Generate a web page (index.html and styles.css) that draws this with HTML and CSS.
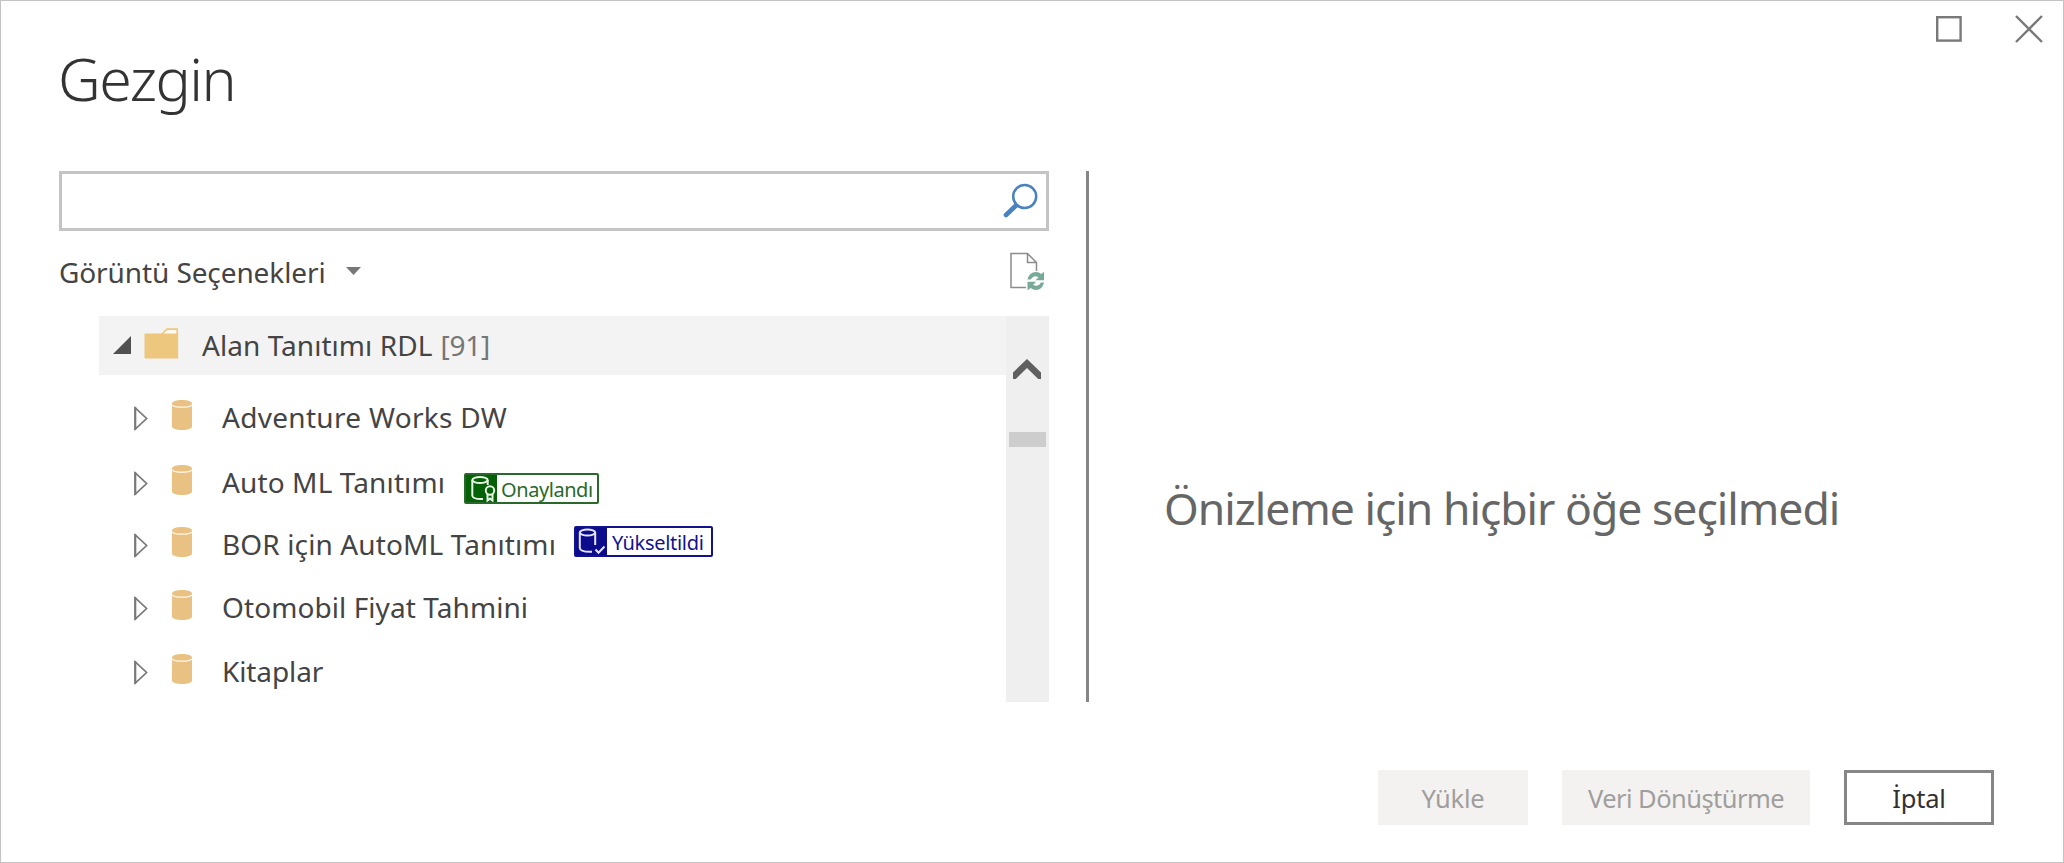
FILE: index.html
```html
<!DOCTYPE html>
<html lang="tr">
<head>
<meta charset="utf-8">
<title>Gezgin</title>
<link rel="stylesheet" href="styles.css">
</head>
<body>
<svg width="0" height="0" class="defs">
  <symbol id="tri" viewBox="0 0 14 25"><path d="M1.3 2v21L12.6 12.5Z" fill="#fff" stroke="#797979" stroke-width="1.7"/><path d="M1.2 1v23" stroke="#797979" stroke-width="2"/></symbol>
  <symbol id="cyl" viewBox="0 0 20 30"><path d="M0 3.5C0 1.4 4.5 0 10 0s10 1.400 10 3.500V26.500C20 28.600 15.500 30 10 30S0 28.600 0 26.500Z" fill="#e9c182"/><path d="M0 4.800C2 8 18 8 20 4.800" fill="none" stroke="#fff8ea" stroke-width="1.300"/></symbol>
</svg>
<main class="dialog">
  <div class="window-controls">
    <svg class="maximize" width="26" height="26" viewBox="0 0 26 26"><rect x="1.200" y="1.200" width="23.400" height="23.400" fill="none" stroke="#797979" stroke-width="2.400"/></svg>
    <svg width="28" height="28" viewBox="0 0 28 28"><path d="M1 1l26 26M27 1L1 27" stroke="#797979" stroke-width="2.400"/></svg>
  </div>
  <h1 class="title">Gezgin</h1>
  <div class="content">
    <section class="navigator">
      <div class="search">
        <svg width="35" height="36" viewBox="0 0 35 36"><circle cx="21.700" cy="13.600" r="11.500" fill="none" stroke="#4a82bf" stroke-width="2.500"/><path d="M13 22.500L3 32" stroke="#4a82bf" stroke-width="4.600" stroke-linecap="round"/></svg>
      </div>
      <div class="options">
        <span class="options-label">Görüntü Seçenekleri</span>
        <svg class="caret" width="15" height="8" viewBox="0 0 15 8"><path d="M0 0h15L7.500 8Z" fill="#777"/></svg>
        <svg class="refresh" width="35" height="39" viewBox="0 0 35 39">
          <path d="M16 35.600H1V1.500H17.500L26.500 10.500V19M17.500 1.500V10.500H26.500" fill="none" stroke="#8c8c8c" stroke-width="1.500"/>
          <path d="M17.500 27.500C18.300 23 21.800 20 26 20c2 0 3.800.7 5.200 2L34 19.800v8.400h-8.400l2.900-3A5 5 0 0 0 20.800 27.500Z" fill="#78aa98"/>
          <path d="M34 30.500C33.200 35 30 38 26 38c-2 0-3.800-.8-5.200-2L17.500 38.300v-8.500h8.700l-3 3a5 5 0 0 0 7.600-2.300Z" fill="#78aa98"/>
        </svg>
      </div>
      <div class="tree-box">
        <div class="tree">
          <div class="root">
            <svg class="open" width="18" height="18" viewBox="0 0 18 18"><path d="M18 0V18H0Z" fill="#505050"/></svg>
            <svg class="folder" width="35" height="31" viewBox="0 0 35 31"><path d="M18 6L23 1.200H33.200V8H18Z" fill="#fffaf0" stroke="#eec77e" stroke-width="1.700"/><path d="M1.500 5.500H34.200V30.500H1.500Q.5 30.500 .5 29.500V6.500Q.5 5.500 1.500 5.500Z" fill="#eec77e"/></svg>
            <span class="name root-name">Alan Tanıtımı RDL</span><span class="name count">[91]</span>
          </div>
          <div class="row r1"><svg class="tri"><use href="#tri"/></svg><svg class="cyl"><use href="#cyl"/></svg><span class="name">Adventure Works DW</span></div>
          <div class="row r2"><svg class="tri"><use href="#tri"/></svg><svg class="cyl"><use href="#cyl"/></svg><span class="name">Auto ML Tanıtımı</span>
            <span class="badge certified"><svg width="31" height="27" viewBox="0 0 31 27"><g fill="none" stroke="#e6f3e3" stroke-width="2"><ellipse cx="14" cy="5" rx="7.700" ry="3.100"/><path d="M6.300 5V20.500C6.500 23 10 24.300 17 24M21.700 5V10"/><circle cx="24" cy="15.500" r="4.200"/><path d="M21.500 19V25.500L24 23.600 26.500 25.500V19"/></g></svg><span>Onaylandı</span></span></div>
          <div class="row r3"><svg class="tri"><use href="#tri"/></svg><svg class="cyl"><use href="#cyl"/></svg><span class="name">BOR için AutoML Tanıtımı</span>
            <span class="badge promoted"><svg width="31" height="27" viewBox="0 0 31 27"><g fill="none" stroke="#e4e4fa" stroke-width="2"><ellipse cx="11.500" cy="4.500" rx="7.700" ry="3.100"/><path d="M3.800 4.500V20C4 22.800 8 24 16 23.700M19.200 4.500V17M19.500 21.500l3 3.200 6-6.200"/></g></svg><span>Yükseltildi</span></span></div>
          <div class="row r4"><svg class="tri"><use href="#tri"/></svg><svg class="cyl"><use href="#cyl"/></svg><span class="name">Otomobil Fiyat Tahmini</span></div>
          <div class="row r5"><svg class="tri"><use href="#tri"/></svg><svg class="cyl"><use href="#cyl"/></svg><span class="name">Kitaplar</span></div>
        </div>
        <div class="scrollbar">
          <svg width="28" height="20" viewBox="0 0 28 20"><path d="M14 0L28 13.500V20H25.200L14 9 2.800 20H0V13.500Z" fill="#606060"/></svg>
          <div class="thumb"></div>
        </div>
      </div>
    </section>
    <section class="preview"><p class="empty">Önizleme için hiçbir öğe seçilmedi</p></section>
  </div>
  <footer class="actions">
    <button class="btn load" disabled><span>Yükle</span></button>
    <button class="btn transform" disabled><span>Veri Dönüştürme</span></button>
    <button class="btn cancel"><span>İptal</span></button>
  </footer>
</main>
</body>
</html>
```
FILE: styles.css
```css
* { box-sizing: border-box; }
body { margin: 0; font-family: "Noto Sans", "Open Sans", sans-serif; color: #444; background: #fff; }
svg { display: block; flex: none; }
.defs { position: absolute; }
.dialog { width: 2064px; height: 863px; border: 1px solid #c3c3c3; display: flex; flex-direction: column; overflow: hidden; }
.window-controls { display: flex; justify-content: flex-end; gap: 53px; height: 39px; padding: 14px 20px 0 0; }
.maximize { margin-top: 1px; }
.title { margin: 0 0 0 57px; height: 131px; line-height: 76px; font-size: 59px; font-weight: 300; letter-spacing: -1.5px; color: #333; white-space: nowrap; }
.content { display: flex; height: 531px; padding-left: 58px; }
.navigator { width: 990px; }
.search { height: 60px; border: 3px solid #c4c4c4; display: flex; justify-content: flex-end; padding: 9px 8px 0 0; }
.options { height: 85px; display: flex; align-items: flex-start; }
.options-label { width: 287px; font-size: 28px; line-height: 40px; letter-spacing: -.1px; padding-top: 21px; white-space: nowrap; }
.caret { margin-top: 36px; }
.refresh { margin: 21px 4px 0 auto; }
.tree-box { display: flex; height: 386px; }
.tree { width: 907px; margin-left: 40px; font-size: 28px; white-space: nowrap; }
.root { height: 59px; background: #f3f3f3; display: flex; align-items: center; }
.open { margin: 0 0 1px 14px; }
.folder { margin: 12px 23px 0 13px; align-self: flex-start; }
.name { letter-spacing: .12px; padding-bottom: 2px; }
.root-name { letter-spacing: .05px; }
.count { color: #767676; margin-left: 8px; letter-spacing: -.2px; }
.row { height: 48px; display: flex; align-items: center; padding-left: 35px; }
.r1 { margin-top: 19px; }
.r1 .name { letter-spacing: .3px; }
.r2 { margin-top: 17px; }
.r3 { margin-top: 14px; }
.r4 { margin-top: 15px; }
.r4 .name { letter-spacing: .08px; }
.r5 { margin-top: 16px; }
.r5 .name { letter-spacing: -.1px; }
.tri { width: 14px; height: 25px; }
.cyl { width: 20px; height: 30px; margin: 0 30px 6px 24px; }
.badge { display: flex; align-items: center; height: 31px; border: 2px solid; border-radius: 2px; font-size: 20px; line-height: 29px; }
.badge span { background: #fff; height: 27px; flex: 1; min-width: 0; padding-left: 4px; }
.certified { color: #29692b; background: #056105; margin: 11px 0 0 19px; width: 135px; letter-spacing: -.45px; }
.promoted { color: #12128e; background: #0b0b8b; margin: -8px 0 0 18px; width: 139px; letter-spacing: -.3px; }
.promoted span { padding-left: 5px; }
.certified, .promoted { border-color: currentColor; }
.scrollbar { width: 43px; background: #efefef; padding: 43px 3px 0; }
.scrollbar svg { margin-left: 4px; }
.thumb { height: 15px; margin-top: 53px; background: #cdcdcd; }
.preview { margin-left: 37px; flex: 1; border-left: 3px solid #868686; }
.empty { margin: 307px 0 0 75px; font-size: 44.500px; line-height: 60px; letter-spacing: -1px; color: #666; white-space: nowrap; }
.actions { display: flex; justify-content: flex-end; gap: 34px; padding: 68px 69px 0 0; }
.btn { height: 55px; padding: 2px 0 0; border: 0; background: #f3f2f1; color: #a09e9c; font: 25.500px/53px "Noto Sans", sans-serif; letter-spacing: -.2px; white-space: nowrap; width: 150px; }
.transform { width: 248px; letter-spacing: -.55px; }
.cancel { border: 3px solid #868686; background: #fff; color: #323130; line-height: 47px; }
```
